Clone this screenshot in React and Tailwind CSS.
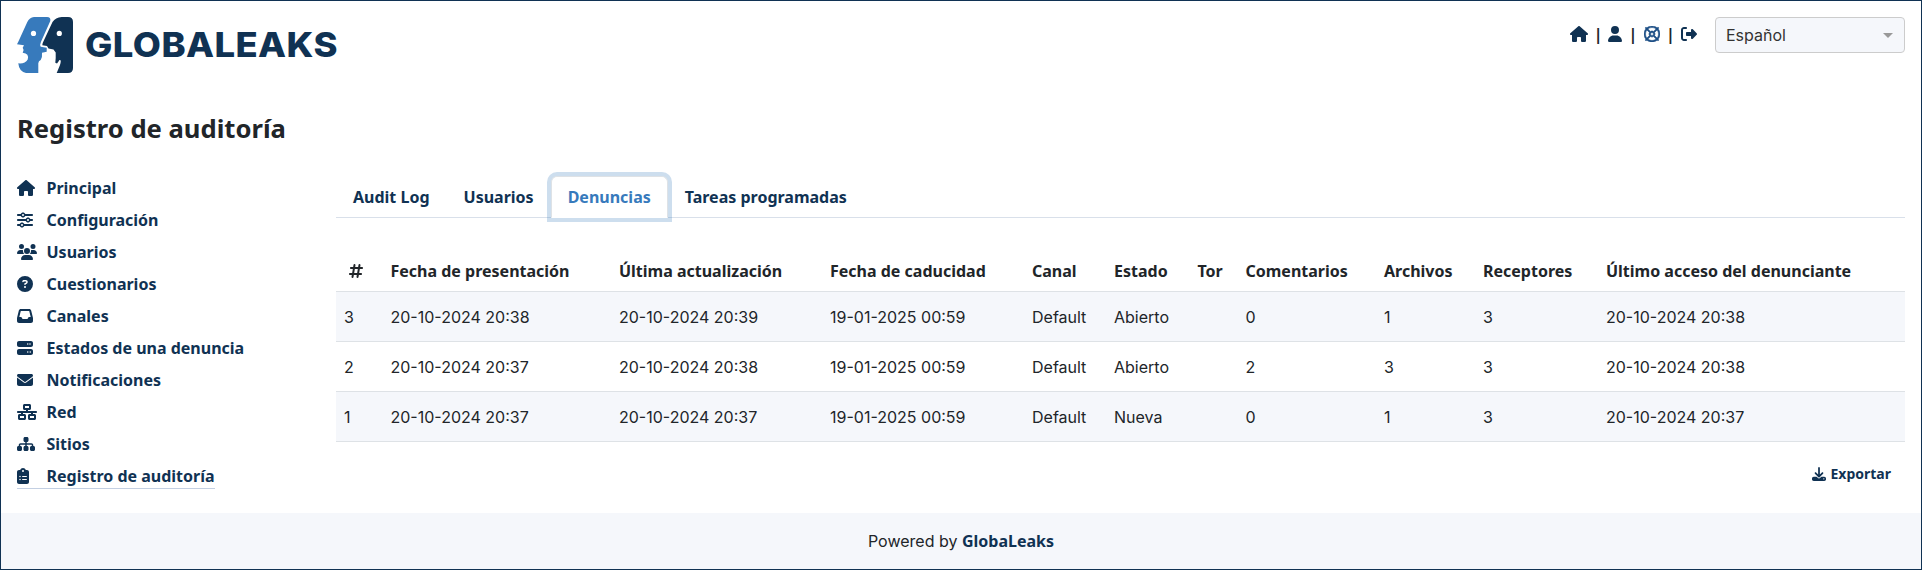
import {
  FaHouse, FaUser, FaRegLifeRing, FaRightFromBracket, FaSliders, FaUsers,
  FaCircleQuestion, FaInbox, FaServer, FaEnvelope, FaNetworkWired, FaSitemap,
  FaClipboardList, FaDownload, FaHashtag,
} from "react-icons/fa6";

const menu = [
  [FaHouse, "Principal", "h-4 w-[18px]"],
  [FaSliders, "Configuración", "size-4"],
  [FaUsers, "Usuarios", "h-4 w-5"],
  [FaCircleQuestion, "Cuestionarios", "size-4"],
  [FaInbox, "Canales", "size-4"],
  [FaServer, "Estados de una denuncia", "size-4"],
  [FaEnvelope, "Notificaciones", "size-4"],
  [FaNetworkWired, "Red", "h-4 w-5"],
  [FaSitemap, "Sitios", "h-4 w-[18px]"],
  [FaClipboardList, "Registro de auditoría", "h-4 w-3"],
];

const tabs = ["Audit Log", "Usuarios", "Denuncias", "Tareas programadas"];

const headers = [
  "Fecha de presentación", "Última actualización", "Fecha de caducidad", "Canal",
  "Estado", "Tor", "Comentarios", "Archivos", "Receptores", "Último acceso del denunciante",
];

const rows = [
  ["3", "20-10-2024 20:38", "20-10-2024 20:39", "19-01-2025 00:59", "Default", "Abierto", "", "0", "1", "3", "20-10-2024 20:38"],
  ["2", "20-10-2024 20:37", "20-10-2024 20:38", "19-01-2025 00:59", "Default", "Abierto", "", "2", "3", "3", "20-10-2024 20:38"],
  ["1", "20-10-2024 20:37", "20-10-2024 20:37", "19-01-2025 00:59", "Default", "Nueva", "", "0", "1", "3", "20-10-2024 20:37"],
];

function Logo() {
  return (
    <svg width="324" height="56" viewBox="0 0 324 56" className="shrink-0">
      <path fill="#377abc" d="M17 0H30Q34 0 33.300 4L24 24.700Q22.500 28 23.700 29.700L29.700 30.700V34.700L25 35.700Q25.500 40 23.700 43Q21.500 44 21.300 46.300V56H9Q2 54.500 1.300 46.300Q8 47 10.700 42.500Q12.500 36.500 5.700 35.700L6.600 33 5.700 30.700 7 28.300 0 27.300 1.300 24.700 10.300 5Q12.500 0.500 17 0Z" />
      <path fill="#103253" d="M44.700 0H51Q56 0 56 5V51Q56 56 51 56H39.700L43 48Q44.200 44 43.500 43.200Q42.300 42.500 41.500 44.500L40 46.500 38.300 45.700 38.700 41V35.500L36.500 32.500 31.500 31.500 30 29 25.300 28.300 25.700 26 35.500 5Q38.500 0.300 44.700 0Z" />
      <circle cx="16.500" cy="16.400" r="2.600" fill="#fff" />
      <circle cx="42.300" cy="16.400" r="2.600" fill="#fff" />
      <text x="68" y="40" textLength="253" lengthAdjust="spacingAndGlyphs" className="fill-[#103253] font-['Inter',sans-serif] text-[34.500px] font-extrabold tracking-[0.400px]">GLOBALEAKS</text>
    </svg>
  );
}

export default function App() {
  return (
    <div className="flex h-[570px] w-full flex-col border border-[#103253] bg-white font-['Inter',sans-serif] text-base leading-6 text-[#212529]">
      <header className="flex h-[95px] items-start justify-between px-4 pt-4">
        <Logo />
        <div className="flex items-start">
          <div className="flex h-[34px] items-center font-['Noto_Sans',sans-serif] font-bold text-[#103253]">
            <FaHouse className="h-4 w-[18px]" />
            <span className="mr-[5.700px] ml-[6px] text-[#212529]">|</span>
            <FaUser className="h-4 w-[14px]" />
            <span className="mx-[6.400px] text-[#212529]">|</span>
            <FaRegLifeRing className="size-4 stroke-[#1d4f86] stroke-[18] text-[#1d4f86]" />
            <span className="mx-[6.200px] text-[#212529]">|</span>
            <FaRightFromBracket className="size-4" />
          </div>
          <div className="ml-[18px] flex h-9 w-[190px] items-center justify-between rounded border border-[#ccc] bg-[#f5f7fb] pr-[11px] pl-[10px] text-[#333]">
            Español
            <span className="border-x-[5px] border-t-[5px] border-x-transparent border-t-[#999]" />
          </div>
        </div>
      </header>

      <h1 className="h-[72px] px-4 pt-[17px] font-['Noto_Sans',sans-serif] text-[25.600px] leading-[32px] font-bold">Registro de auditoría</h1>

      <main className="flex grow px-4">
        <nav className="flex w-[319px] flex-col items-start gap-1.5 pt-[7px] font-['Noto_Sans',sans-serif] leading-[26px] font-bold text-[#103253]">
          {menu.map(([Icon, label, size], i) => (
            <a key={label} className={i === 9 ? "flex h-[26px] items-start border-b border-[#c3cfe2]" : "flex h-[26px] items-start"}>
              <span className="flex h-[26px] w-[29.500px] items-center">
                <Icon className={size} />
              </span>
              {label}
            </a>
          ))}
        </nav>

        <section className="flex grow flex-col">
          <div className="mt-2 flex h-[42px] border-b border-[#d9e0ea] font-['Noto_Sans',sans-serif] font-bold">
            {tabs.map((t) => (
              <a
                key={t}
                className={
                  t === "Denuncias"
                    ? "flex h-[42px] items-center rounded-t-md border border-b-white border-[#dee2e6] bg-white px-4 text-[#377abc] ring-4 ring-[#377abc]/25"
                    : "flex h-[42px] items-center border border-transparent px-4 text-[#103253]"
                }
              >
                {t}
              </a>
            ))}
          </div>

          <table className="mt-[33px] w-[1569px] table-fixed border-separate border-spacing-0 text-left">
            <colgroup>
              <col className="w-[46.500px]" />
              <col className="w-[228.500px]" />
              <col className="w-[211px]" />
              <col className="w-[202px]" />
              <col className="w-[82px]" />
              <col className="w-[83.500px]" />
              <col className="w-[48px]" />
              <col className="w-[138.500px]" />
              <col className="w-[99px]" />
              <col className="w-[123px]" />
              <col />
            </colgroup>
            <thead>
              <tr className="h-[41px] font-['Noto_Sans',sans-serif]">
                <th className="border-b border-[#dee2e6] pl-[13px]"><FaHashtag className="h-4 w-[14px]" /></th>
                {headers.map((h) => (
                  <th key={h} className="border-b border-[#dee2e6] px-2 font-bold whitespace-nowrap">{h}</th>
                ))}
              </tr>
            </thead>
            <tbody>
              {rows.map((r) => (
                <tr key={r[0]} className="h-[50px] odd:bg-[#f5f7fb]">
                  {r.map((c, i) => (
                    <td key={i} className="border-b border-[#dee2e6] px-2 whitespace-nowrap">{c}</td>
                  ))}
                </tr>
              ))}
            </tbody>
          </table>

          <div className="mt-5 mr-[14px] flex items-center justify-end gap-1 font-['Noto_Sans',sans-serif] text-sm leading-6 font-bold text-[#103253]">
            <FaDownload className="size-[14px]" />
            Exportar
          </div>
        </section>
      </main>

      <footer className="flex h-14 items-center justify-center bg-[#f5f7fb]">
        <span>
          Powered by <b className="font-['Noto_Sans',sans-serif] font-bold text-[#103253]">GlobaLeaks</b>
        </span>
      </footer>
    </div>
  );
}
